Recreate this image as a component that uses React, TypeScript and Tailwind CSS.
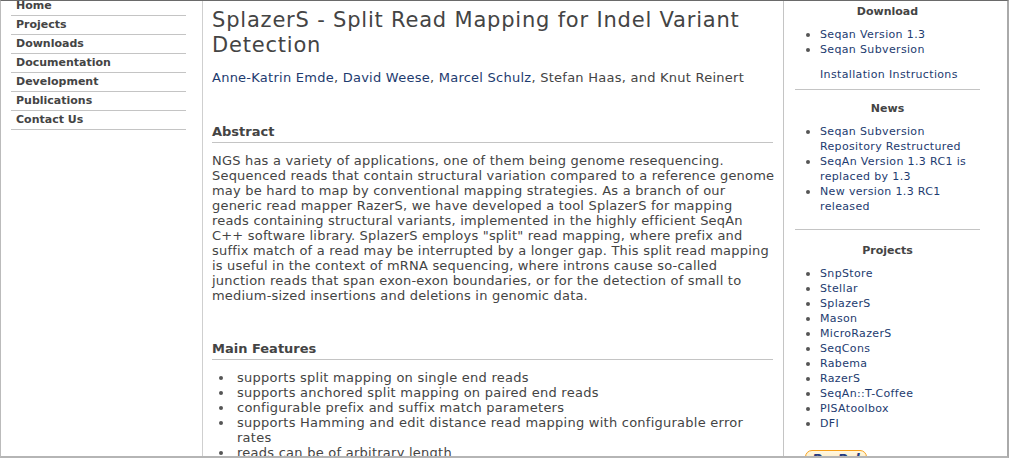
import React from "react";

const navItems = [
  "Home",
  "Projects",
  "Downloads",
  "Documentation",
  "Development",
  "Publications",
  "Contact Us",
];

const newsItems = [
  "Seqan Subversion Repository Restructured",
  "SeqAn Version 1.3 RC1 is replaced by 1.3",
  "New version 1.3 RC1 released",
];

const projectItems = [
  "SnpStore",
  "Stellar",
  "SplazerS",
  "Mason",
  "MicroRazerS",
  "SeqCons",
  "Rabema",
  "RazerS",
  "SeqAn::T-Coffee",
  "PISAtoolbox",
  "DFI",
];

const features = [
  "supports split mapping on single end reads",
  "supports anchored split mapping on paired end reads",
  "configurable prefix and suffix match parameters",
  "supports Hamming and edit distance read mapping with configurable error rates",
  "reads can be of arbitrary length",
];

const abstractLines = [
  "NGS has a variety of applications, one of them being genome resequencing.",
  "Sequenced reads that contain structural variation compared to a reference genome",
  "may be hard to map by conventional mapping strategies. As a branch of our",
  "generic read mapper RazerS, we have developed a tool SplazerS for mapping",
  "reads containing structural variants, implemented in the highly efficient SeqAn",
  'C++ software library. SplazerS employs "split" read mapping, where prefix and',
  "suffix match of a read may be interrupted by a longer gap. This split read mapping",
  "is useful in the context of mRNA sequencing, where introns cause so-called",
  "junction reads that span exon-exon boundaries, or for the detection of small to",
  "medium-sized insertions and deletions in genomic data.",
];

const SideList = ({ items }: { items: string[] }) => (
  <ul className="pl-[11px]">
    {items.map((item) => (
      <li key={item} className="flex">
        <span className="mt-[6px] mr-[10px] h-[4px] w-[4px] shrink-0 rounded-full bg-[#555]" />
        <a className="w-[162px] text-[#1d3b6f]">{item}</a>
      </li>
    ))}
  </ul>
);

const SideHeading = ({ children, className = "" }: { children: React.ReactNode; className?: string }) => (
  <h3 className={`text-center text-[11px] font-bold leading-[15px] tracking-normal text-[#444] ${className}`}>
    {children}
  </h3>
);

const App = () => {
  return (
    <div
      className="h-[458px] w-[1009px] overflow-hidden border-t border-l border-r-2 border-b-2 border-t-[#6a6a6a] border-l-[#bbb] border-r-[#aaa] border-b-[#b5b5b5] bg-white text-[#444]"
      style={{ fontFamily: '"DejaVu Sans", Verdana, sans-serif' }}
    >
      <div className="flex h-full">
        {/* left navigation */}
        <div className="w-[202px] shrink-0 border-r border-[#cfcfcf] pl-[10px]">
          <ul className="mt-[-4px] w-[175px]">
            {navItems.map((item) => (
              <li
                key={item}
                className="h-[19px] border-b border-[#c4c4c4] pl-[5px] text-[11px] font-bold leading-[18px] text-[#444]"
              >
                {item}
              </li>
            ))}
          </ul>
        </div>

        {/* main content */}
        <div className="w-[581px] shrink-0 border-r border-[#c4c4c4] pl-[9px] pr-[10px]">
          <div className="w-[561px]">
            <h1 className="mt-[7px] text-[21px] leading-[25px] tracking-[0.8px] text-[#444]">
              SplazerS - Split Read Mapping for Indel Variant Detection
            </h1>
            <p className="mt-[12px] text-[13px] leading-[15px] tracking-[0.25px] text-[#444]">
              <a className="text-[#1d3b6f]">Anne-Katrin Emde</a>,{" "}
              <a className="text-[#1d3b6f]">David Weese</a>,{" "}
              <a className="text-[#1d3b6f]">Marcel Schulz</a>, Stefan Haas, and Knut Reinert
            </p>

            <h2 className="mt-[38px] border-b border-[#c4c4c4] pb-[2px] text-[13px] font-bold leading-[17px] text-[#444]">
              Abstract
            </h2>
            <p className="mt-[10px] whitespace-nowrap text-[13px] leading-[15px] tracking-[0.2px] text-[#444]">
              {abstractLines.map((line, idx) => (
                <React.Fragment key={idx}>
                  {line}
                  {idx < abstractLines.length - 1 && <br />}
                </React.Fragment>
              ))}
            </p>

            <h2 className="mt-[37px] border-b border-[#c4c4c4] pb-[2px] text-[13px] font-bold leading-[17px] text-[#444]">
              Main Features
            </h2>
            <ul className="mt-[10px] pl-[7px] text-[13px] leading-[15px] tracking-[0.25px]">
              {features.map((f) => (
                <li key={f} className="flex">
                  <span className="mt-[6px] mr-[14px] h-[4px] w-[4px] shrink-0 rounded-full bg-[#555]" />
                  <span className="w-[530px]">{f}</span>
                </li>
              ))}
            </ul>
          </div>
        </div>

        {/* right sidebar */}
        <div className="flex-1 pl-[11px]">
          <div className="w-[185px] text-[11px] leading-[15px] tracking-[0.35px]">
            <SideHeading className="mt-[3px]">Download</SideHeading>
            <div className="mt-[8px]">
              <SideList items={["Seqan Version 1.3", "Seqan Subversion"]} />
            </div>
            <p className="mt-[10px] pl-[25px] text-[#1d3b6f]">Installation Instructions</p>
            <div className="mt-[7px] border-t border-[#c4c4c4]" />

            <SideHeading className="mt-[11px]">News</SideHeading>
            <div className="mt-[8px]">
              <SideList items={newsItems} />
            </div>
            <div className="mt-[15px] border-t border-[#c4c4c4]" />

            <SideHeading className="mt-[13px]">Projects</SideHeading>
            <div className="mt-[8px]">
              <SideList items={projectItems} />
            </div>

            <div className="mt-[19px] ml-[10px] h-[26px] w-[62px] rounded-[7px] border border-[#f7a11a] bg-gradient-to-b from-[#fff7e0] to-[#ffd98a] text-center text-[13px] font-bold italic leading-[16px] tracking-normal text-[#253b80]">
              PayPal
            </div>
          </div>
        </div>
      </div>
    </div>
  );
};

export default App;
